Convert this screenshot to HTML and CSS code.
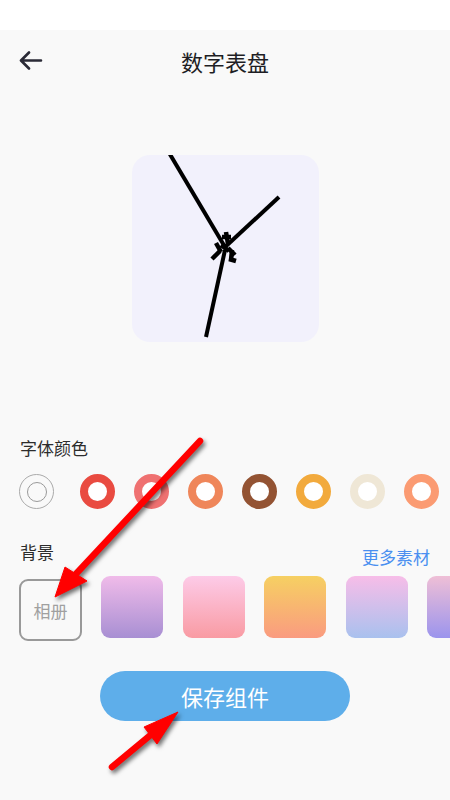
FILE: index.html
```html
<!DOCTYPE html>
<html lang="zh">
<head>
<meta charset="utf-8">
<title>数字表盘</title>
<link rel="stylesheet" href="styles.css">
</head>
<body>
<div class="page">
  <div class="status"></div>
  <header class="header">
    <div class="back">
      <svg width="24" height="20" viewBox="0 0 24 20"><path d="M22 9.5H2.5M10 1.5L2 9.5L10 17.5" fill="none" stroke="#2a2a36" stroke-width="2.6" stroke-linecap="round" stroke-linejoin="round"/></svg>
    </div>
    <h1 class="title">数字表盘</h1>
    <div></div>
  </header>

  <section class="preview">
    <div class="clock">
      <svg width="187" height="187" viewBox="0 0 187 187">
        <g stroke="#000" stroke-width="4" stroke-linecap="butt" fill="none">
          <line x1="36" y1="-4" x2="93" y2="92"/>
          <line x1="92" y1="93" x2="147" y2="42"/>
          <line x1="93" y1="95" x2="74" y2="182"/>
        </g>
        <g stroke="#000" stroke-width="4.5" stroke-linecap="butt" fill="none">
          <line x1="94" y1="77" x2="96" y2="89"/>
          <line x1="90" y1="82" x2="99" y2="82"/>
          <line x1="84" y1="88" x2="89" y2="97"/>
          <line x1="80" y1="104" x2="88" y2="96"/>
          <line x1="96" y1="93" x2="103" y2="100"/>
          <line x1="97" y1="104" x2="104" y2="106"/>
          <line x1="100" y1="95" x2="99" y2="105"/>
          <line x1="89" y1="90" x2="97" y2="96"/>
        </g>
      </svg>
    </div>
  </section>

  <section class="fonts">
    <div class="label">字体颜色</div>
    <div class="colors">
      <div class="swatch none"><span class="inner"></span></div>
      <div class="swatch ring c1"></div>
      <div class="swatch ring c2"></div>
      <div class="swatch ring c3"></div>
      <div class="swatch ring c4"></div>
      <div class="swatch ring c5"></div>
      <div class="swatch ring c6"></div>
      <div class="swatch ring c7"></div>
    </div>
  </section>

  <section class="bgs">
    <div class="bg-head">
      <div class="label">背景</div>
      <div class="more">更多素材</div>
    </div>
    <div class="tiles">
      <div class="tile album">相册</div>
      <div class="tile g1"></div>
      <div class="tile g2"></div>
      <div class="tile g3"></div>
      <div class="tile g4"></div>
      <div class="tile g5"></div>
    </div>
  </section>

  <div class="actions">
    <button class="save">保存组件</button>
  </div>

  <svg class="annot" width="450" height="800" viewBox="0 0 450 800">
    <g fill="#ff0000" stroke="#ff0000">
      <line x1="200" y1="441" x2="74" y2="576" stroke-width="6.5" stroke-linecap="round"/>
      <polygon points="55,597 65,567 87,581" stroke-width="1" stroke-linejoin="round"/>
      <line x1="112" y1="767" x2="153" y2="733" stroke-width="6.5" stroke-linecap="round"/>
      <polygon points="178,712 144,727 157,744" stroke-width="1" stroke-linejoin="round"/>
    </g>
  </svg>
</div>
</body>
</html>
```

FILE: styles.css
```css
* { box-sizing: border-box; }
html, body { margin: 0; padding: 0; }
body {
  background: #f9f9f9;
  font-family: "Noto Sans CJK SC", "Noto Sans", sans-serif;
  color: #222;
}
.page {
  position: relative;
  width: 450px;
  height: 800px;
  overflow: hidden;
  background: #f9f9f9;
}
.status { height: 30px; background: #fff; }
.header {
  height: 62px;
  display: grid;
  grid-template-columns: 1fr auto 1fr;
  align-items: center;
}
.back { padding-left: 19px; display: flex; align-items: center; }
.title {
  margin: 0;
  font-size: 22px;
  font-weight: 400;
  color: #1e1e24;
  line-height: 30px;
}
.preview {
  margin-top: 63px;
  display: flex;
  justify-content: center;
}
.clock {
  width: 187px;
  height: 187px;
  border-radius: 18px;
  background: #f2f1fc;
  overflow: hidden;
}
.clock svg { display: block; }

.fonts { margin-top: 94px; }
.label {
  padding-left: 20px;
  font-size: 17px;
  line-height: 24px;
  color: #2c2c2c;
}
.colors {
  margin-top: 14px;
  padding-left: 19px;
  display: flex;
  gap: 19px;
  overflow: hidden;
}
.swatch {
  flex: 0 0 35px;
  width: 35px;
  height: 35px;
  border-radius: 50%;
}
.swatch.none {
  border: 1.3px solid #aaa;
  display: flex;
  align-items: center;
  justify-content: center;
  margin-right: 7px;
}
.swatch.none .inner {
  width: 20px;
  height: 20px;
  border-radius: 50%;
  border: 1.3px solid #999;
}
.ring { border: 8.5px solid; background: #fff; }
.c1 { border-color: #e94b41; }
.c2 { border-color: #ef7171; }
.c3 { border-color: #ef865a; }
.c4 { border-color: #935333; }
.c5 { border-color: #f2aa3d; }
.c6 { border-color: #efe7d6; }
.c7 { border-color: #fb9b72; }

.bgs { margin-top: 31px; }
.bg-head {
  display: flex;
  justify-content: space-between;
  align-items: flex-start;
  height: 29px;
}
.more {
  margin-top: 5px;
  padding-right: 20px;
  font-size: 17px;
  line-height: 24px;
  color: #4a8ff0;
}
.tiles {
  margin-top: 7px;
  padding-left: 19px;
  display: flex;
  gap: 19.6px;
  overflow: hidden;
  align-items: flex-start;
}
.tile {
  flex: 0 0 62px;
  width: 62px;
  height: 62px;
  border-radius: 9px;
}
.tile.album {
  flex-basis: 63px;
  width: 63px;
  margin-top: 3px;
  margin-right: -0.6px;
  border: 2px solid #999;
  display: flex;
  align-items: center;
  justify-content: center;
  font-size: 17px;
  color: #a0a0a0;
}
.g1 { background: linear-gradient(#f0bbe9, #a88fd3); }
.g2 { background: linear-gradient(#fdcbe8, #f99ba3); }
.g3 { background: linear-gradient(#f6d062, #fa9b80); }
.g4 { background: linear-gradient(#f7bde8, #a9c1ee); }
.g5 { background: linear-gradient(#efbfd6, #9b94ed); }

.actions {
  margin-top: 30px;
  display: flex;
  justify-content: center;
}
.save {
  width: 250px;
  height: 50px;
  border: none;
  border-radius: 25px;
  background: #5eaeea;
  color: #fff;
  font-family: "Noto Sans CJK SC", "Noto Sans", sans-serif;
  font-size: 22px;
  line-height: 30px;
  padding: 0;
}
.annot {
  position: absolute;
  left: 0;
  top: 0;
  pointer-events: none;
  filter: drop-shadow(2px 3px 2px rgba(0, 0, 0, 0.55));
}
```
